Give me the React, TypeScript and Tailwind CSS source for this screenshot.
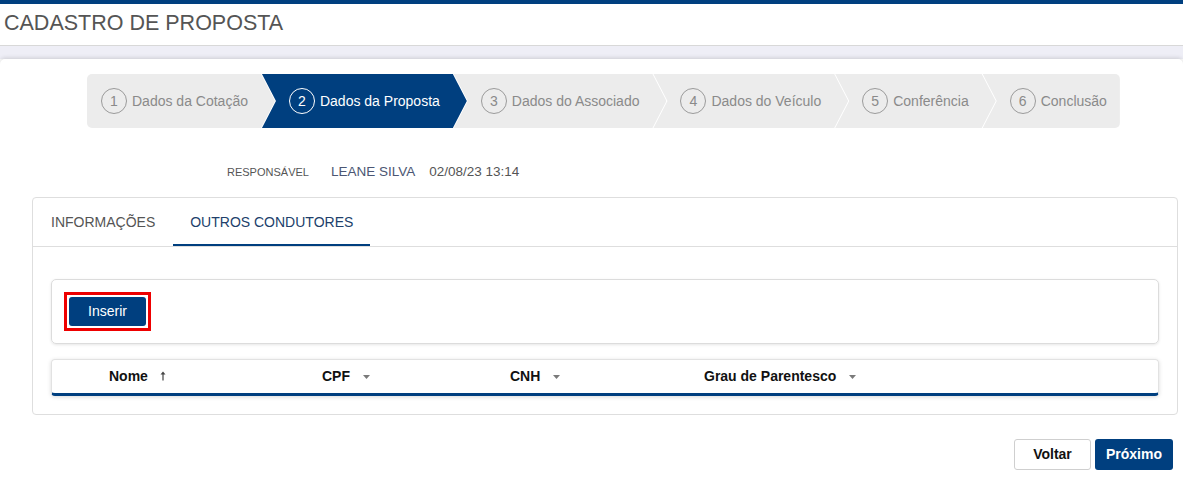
const STEPS = [
  "Dados da Cotação",
  "Dados da Proposta",
  "Dados do Associado",
  "Dados do Veículo",
  "Conferência",
  "Conclusão",
];

const ACTIVE_STEP = 1;

// chevron shapes for the wizard steps
const CLIP_FIRST =
  "rounded-l-[5px] pl-[14px] pr-[27px] [clip-path:polygon(0_0,calc(100%_-_14px)_0,100%_50%,calc(100%_-_14px)_100%,0_100%)]";
const CLIP_MIDDLE =
  "-ml-[13px] pl-[27px] pr-[27px] [clip-path:polygon(0_0,calc(100%_-_14px)_0,100%_50%,calc(100%_-_14px)_100%,0_100%,14px_50%)]";
const CLIP_LAST =
  "-ml-[13px] rounded-r-[5px] pl-[27px] pr-[13px] [clip-path:polygon(0_0,100%_0,100%_100%,0_100%,14px_50%)]";

function Stepper() {
  return (
    <div className="ml-[87px] flex h-[54px]">
      {STEPS.map((label, i) => {
        const active = i === ACTIVE_STEP;
        const shape = i === 0 ? CLIP_FIRST : i === STEPS.length - 1 ? CLIP_LAST : CLIP_MIDDLE;
        return (
          <div
            key={label}
            className={`flex h-full items-center gap-[5px] ${shape} ${
              active ? "bg-[#003f7f] text-white" : "bg-[#ececec] text-[#8a8a8a]"
            }`}
          >
            <span
              className={`flex h-[26px] w-[26px] items-center justify-center rounded-full border text-[14px] ${
                active ? "border-white" : "border-[#9a9a9a]"
              }`}
            >
              {i + 1}
            </span>
            <span className="whitespace-nowrap text-[14px]">{label}</span>
          </div>
        );
      })}
    </div>
  );
}

function Caret() {
  return (
    <svg width="7" height="4" viewBox="0 0 7 4" className="ml-[13px]">
      <path d="M0 0h7L3.5 4z" fill="#7a7a7a" />
    </svg>
  );
}

function SortUp() {
  return (
    <svg width="6" height="10" viewBox="0 0 6 10" className="ml-[12px] mb-[2px]">
      <path d="M3 0.5L0.5 3.5h5z" fill="#444" />
      <path d="M3 3v6.5" stroke="#444" strokeWidth="1.2" />
    </svg>
  );
}

function TableHeader() {
  return (
    <div className="mt-[15px] rounded-[4px] border border-[#e2e2e2] border-b-[3px] border-b-[#003f7f] shadow-[0_1px_4px_rgba(0,0,0,0.15)]">
      <div className="grid h-[33px] grid-cols-[213px_188px_194px_1fr] items-center pl-[57px] text-[14px] font-bold text-[#111]">
        <div className="flex items-center">
          Nome
          <SortUp />
        </div>
        <div className="flex items-center">
          CPF
          <Caret />
        </div>
        <div className="flex items-center">
          CNH
          <Caret />
        </div>
        <div className="flex items-center">
          Grau de Parentesco
          <Caret />
        </div>
      </div>
    </div>
  );
}

export default function App() {
  return (
    <div className="min-h-[479px] bg-white font-['Liberation_Sans',Arial,sans-serif]">
      <div className="h-[4px] bg-[#003f7f]" />
      <header className="flex h-[42px] items-center border-b border-[#d8d8d8] px-[4px] pb-[3px]">
        <h1 className="text-[21.5px] text-[#555]">CADASTRO DE PROPOSTA</h1>
      </header>
      <div className="h-[13px] bg-[#eeeef6]" />

      <main className="rounded-t-[5px] bg-white pt-[15px] pb-[20px] shadow-[0_-1px_4px_rgba(0,0,0,0.15)]">
        <Stepper />

        <div className="mt-[34px] flex items-center pl-[227px] text-[#4b5673]">
          <span className="text-[11px] text-[#555]">RESPONSÁVEL</span>
          <span className="ml-[22px] text-[13.5px]">LEANE SILVA</span>
          <span className="ml-[14px] text-[13.5px] text-[#555]">02/08/23 13:14</span>
        </div>

        <section className="mt-[15px] ml-[32px] mr-[5px] rounded-[4px] border border-[#dedede]">
          <div className="flex h-[49px] border-b border-[#dedede] text-[14px]">
            <div className="flex items-center px-[18px] text-[#555]">INFORMAÇÕES</div>
            <div className="flex items-center border-b-2 border-[#003f7f] px-[17px] pt-[2px] text-[#213f6b]">
              OUTROS CONDUTORES
            </div>
          </div>

          <div className="px-[18px] pt-[32px] pb-[18px]">
            <div className="rounded-[5px] border border-[#dcdcdc] px-[12px] py-[12px] shadow-[0_1px_3px_rgba(0,0,0,0.1)]">
              <div className="inline-flex border-[3px] border-[#ee0000] p-[2px]">
                <button className="h-[29px] w-[77px] rounded-[3px] bg-[#003f7f] text-[14px] text-white">
                  Inserir
                </button>
              </div>
            </div>
            <TableHeader />
          </div>
        </section>

        <div className="mt-[24px] flex justify-end gap-[4px] pr-[10px]">
          <button className="h-[31px] w-[77px] rounded-[3px] border border-[#cfcfcf] bg-white text-[14px] font-bold text-[#111]">
            Voltar
          </button>
          <button className="h-[31px] w-[78px] rounded-[3px] bg-[#003f7f] text-[14px] font-bold text-white">
            Próximo
          </button>
        </div>
      </main>
    </div>
  );
}
